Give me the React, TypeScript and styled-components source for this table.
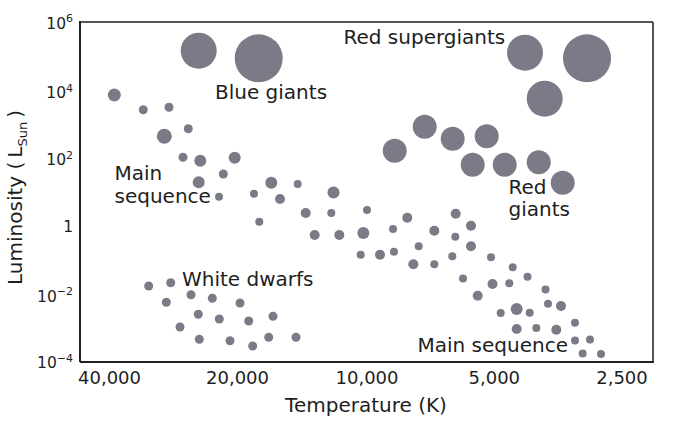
import * as React from "react";
import styled, { createGlobalStyle } from "styled-components";

const GlobalStyle = createGlobalStyle`
  html, body {
    margin: 0;
    padding: 0;
    background: #fff;
  }
  body {
    font-family: "DejaVu Sans", Verdana, sans-serif;
  }
`;

const Page = styled.main`
  width: 673px;
  height: 424px;
  background: #fff;
  overflow: hidden;
`;

const Chart = styled.svg`
  display: block;
  width: 673px;
  height: 424px;
  font-family: "DejaVu Sans", Verdana, sans-serif;
`;

const Star = styled.circle`
  fill: #7a7b86;
`;

const RegionLabel = styled.text`
  font-size: 20px;
  fill: #1e1e1e;
`;

const TickLabel = styled.text<{ size: number }>`
  font-size: ${props => props.size}px;
  fill: #1e1e1e;
`;

const AxisTitle = styled.text`
  font-size: 20px;
  fill: #1e1e1e;
`;

const Frame = styled.line<{ strong?: boolean }>`
  stroke: ${props => (props.strong ? "#222" : "#555")};
  stroke-width: 2;
`;

type Dot = [number, number, number];

const PLOT = { left: 80, top: 22, right: 653, bottom: 362 };

const giants: Dot[] = [
  [198.7, 50.7, 18],
  [258.7, 58.3, 24],
  [525, 52.7, 18],
  [587, 58.3, 24],
  [544.7, 98.7, 18],
  [424.7, 126.7, 12],
  [452.7, 138.7, 12],
  [486.7, 136.3, 12],
  [394.7, 150.7, 12],
  [472.7, 164.7, 12],
  [504.7, 164.7, 12],
  [538.7, 162.3, 12],
  [562.7, 182.7, 12]
];

const mainSequence: Dot[] = [
  [114.3, 95, 6.5],
  [143.3, 109.7, 4.5],
  [169, 107.3, 4.5],
  [164.3, 136.3, 7.5],
  [188.3, 128.7, 4.5],
  [183, 157.3, 4.5],
  [200.3, 160.7, 6],
  [234.7, 157.7, 6],
  [223.3, 174, 4.5],
  [198.7, 182.3, 6],
  [219, 196.7, 4],
  [254, 193.7, 4],
  [271.3, 182.7, 6],
  [280, 199, 5],
  [297.7, 184, 4],
  [333.5, 192.5, 6],
  [259.3, 221.7, 4],
  [305.7, 213, 5],
  [331.3, 213, 4],
  [367, 210, 4],
  [407.3, 217.7, 5],
  [455.7, 213.7, 5],
  [314.7, 235, 5],
  [339.3, 235, 5],
  [363.3, 233, 6],
  [393, 229, 4],
  [434.3, 230.7, 5],
  [455.3, 236.7, 4],
  [471, 225.7, 5],
  [471, 246.3, 5],
  [360.7, 254.7, 4],
  [380, 254.7, 5],
  [394, 251.7, 4],
  [418.7, 246.3, 4],
  [413.3, 264.3, 5],
  [434.3, 264.3, 4],
  [452.3, 256.3, 4],
  [491, 257.3, 4],
  [512.7, 267.3, 4],
  [527.5, 276.7, 4],
  [463, 278.5, 4],
  [492.5, 284, 5],
  [509.3, 283.3, 4],
  [477.7, 295.7, 5],
  [545.5, 289.5, 4],
  [548, 303.7, 4],
  [561, 306, 5],
  [500.7, 313, 4],
  [516.7, 309, 6],
  [529.7, 312.7, 4],
  [575, 322.7, 4],
  [516.7, 329, 5],
  [536.3, 328, 4],
  [556.3, 329.7, 5],
  [575, 340.5, 4],
  [590, 339.5, 4],
  [582.7, 353.5, 4],
  [601, 354, 4]
];

const whiteDwarfs: Dot[] = [
  [148.7, 286, 4.5],
  [170.7, 282.7, 4.5],
  [166.3, 302.3, 4.5],
  [191, 294.7, 4.5],
  [212.3, 298.3, 4.5],
  [240, 303, 4.5],
  [198.3, 314.3, 4.5],
  [219.3, 319, 4.5],
  [248.7, 321, 4.5],
  [273, 316.3, 4.5],
  [180, 327, 4.5],
  [199.3, 339.3, 4.5],
  [230, 340.7, 4.5],
  [252.7, 346, 4.5],
  [268.7, 337.3, 4.5],
  [296, 337.3, 4.5]
];

// luminosity ticks: exponent (null = plain "1") and label baseline
const yTicks: { exp: string | null; y: number }[] = [
  { exp: "6", y: 28.5 },
  { exp: "4", y: 98 },
  { exp: "2", y: 165 },
  { exp: null, y: 232 },
  { exp: "\u22122", y: 301.5 },
  { exp: "\u22124", y: 368 }
];

const xTicks: { label: string; x: number }[] = [
  { label: "40,000", x: 109.5 },
  { label: "20,000", x: 237.5 },
  { label: "10,000", x: 367 },
  { label: "5,000", x: 494.3 },
  { label: "2,500", x: 622 }
];

const labels: { lines: string[]; x: number; y: number }[] = [
  { lines: ["Red supergiants"], x: 343.5, y: 43.5 },
  { lines: ["Blue giants"], x: 215, y: 99 },
  { lines: ["Main", "sequence"], x: 114.5, y: 180 },
  { lines: ["Red", "giants"], x: 508.5, y: 193.5 },
  { lines: ["White dwarfs"], x: 182, y: 286 },
  { lines: ["Main sequence"], x: 417.5, y: 352 }
];

function App() {
  const stars = [...giants, ...mainSequence, ...whiteDwarfs];

  return (
    <Page>
      <GlobalStyle />
      <Chart viewBox="0 0 673 424">
        {stars.map(([cx, cy, r], index) => (
          <Star key={index} cx={cx} cy={cy} r={r} />
        ))}

        <Frame x1={PLOT.left} y1={PLOT.top} x2={PLOT.right} y2={PLOT.top} />
        <Frame x1={PLOT.right} y1={PLOT.top} x2={PLOT.right} y2={PLOT.bottom} />
        <Frame
          strong
          x1={PLOT.left}
          y1={PLOT.top - 1}
          x2={PLOT.left}
          y2={PLOT.bottom}
        />
        <Frame
          strong
          x1={PLOT.left}
          y1={PLOT.bottom}
          x2={PLOT.right + 1}
          y2={PLOT.bottom}
        />

        {labels.map(label => (
          <RegionLabel key={label.lines.join(" ")} x={label.x} y={label.y}>
            {label.lines.map((line, index) => (
              <tspan key={line} x={label.x} dy={index === 0 ? 0 : 22.5}>
                {line}
              </tspan>
            ))}
          </RegionLabel>
        ))}

        {yTicks.map(tick => (
          <TickLabel
            key={tick.y}
            size={15.5}
            x={73}
            y={tick.y}
            textAnchor="end"
          >
            {tick.exp === null ? (
              "1"
            ) : (
              <>
                <tspan>10</tspan>
                <tspan fontSize={11} dy={-6.5}>
                  {tick.exp}
                </tspan>
              </>
            )}
          </TickLabel>
        ))}

        {xTicks.map(tick => (
          <TickLabel
            key={tick.label}
            size={18}
            x={tick.x}
            y={383.7}
            textAnchor="middle"
          >
            {tick.label}
          </TickLabel>
        ))}

        <AxisTitle x={366} y={411.5} textAnchor="middle">
          Temperature (K)
        </AxisTitle>
        <AxisTitle
          transform="translate(21.5 197.5) rotate(-90)"
          x={0}
          y={0}
          textAnchor="middle"
        >
          {"Luminosity (\u2009L"}
          <tspan fontSize={13} dy={5}>
            Sun
          </tspan>
          <tspan dy={-5}>{"\u2009)"}</tspan>
        </AxisTitle>
      </Chart>
    </Page>
  );
}

export default App;
